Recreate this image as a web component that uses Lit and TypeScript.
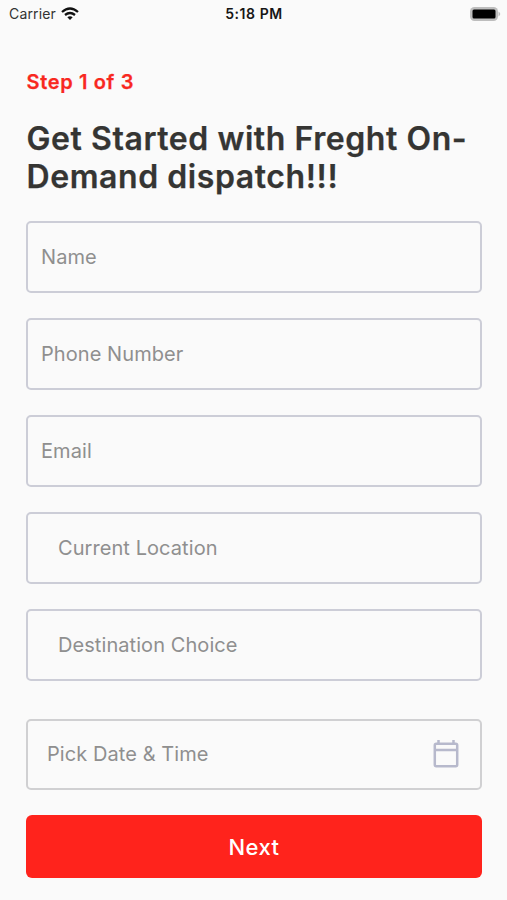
import { LitElement, html, css } from "lit";
import { customElement, property } from "lit/decorators.js";

@customElement("form-field")
class FormField extends LitElement {
  @property() label = "";
  static styles = css`
    :host { display: flex; align-items: center; box-sizing: border-box; height: 72px; padding: 0 21px 0 13px; border: 2px solid #cccdd7; border-radius: 5px; }
    :host([indent]) { padding-left: 30px; }
    :host([picker]) { height: 71px; padding-left: 19px; justify-content: space-between; border-color: #d0d0d2; }
    .label { font-size: 20px; line-height: 24px; letter-spacing: 0.07px; color: #8f8f8f; }
  `;
  render() {
    return html`<span class="label">${this.label}</span><slot></slot>`;
  }
}

@customElement("app-root")
class AppRoot extends LitElement {
  static styles = css`
    :host { display: flex; flex-direction: column; box-sizing: border-box; width: 100%; height: 900px; background: #fafafa; font-family: Inter, "Liberation Sans", sans-serif; overflow: hidden; }
    .status { display: grid; grid-template-columns: 1fr auto 1fr; align-items: center; height: 27px; padding: 0 6px 0 9px; font-size: 14px; line-height: 27px; color: #333; box-sizing: border-box; }
    .carrier { display: flex; align-items: center; gap: 5.5px; letter-spacing: 0.15px; }
    .time { margin-left: -2px; font-weight: 600; font-size: 14px; letter-spacing: 0.55px; color: #161616; }
    .battery { justify-self: end; }
    main { display: flex; flex-direction: column; padding: 0 25px 0 26px; }
    .step { margin-top: 43px; padding-left: 0.5px; font-size: 20px; line-height: 24px; font-weight: 600; letter-spacing: 0.65px; color: #f8281f; -webkit-text-stroke: 0.25px currentColor; }
    h1 { margin: 26px 0 24.5px; padding-left: 0.5px; font-size: 32px; line-height: 38px; font-weight: 600; letter-spacing: 0.57px; color: #353533; white-space: nowrap; -webkit-text-stroke: 0.25px currentColor; }
    form { display: flex; flex-direction: column; gap: 25.3px; }
    .destination { margin-top: -1px; }
    .picker { margin-top: 12.8px; }
    button { height: 63px; margin-top: 0; border: 0; border-radius: 6px; background: #ff231c; color: #fff; font: 500 22px Inter, sans-serif; letter-spacing: 0.5px; }
    svg { display: block; }
  `;
  render() {
    return html`
      <div class="status">
        <div class="carrier"><span>Carrier</span>
          <svg width="18" height="14" viewBox="0 0 18 14" fill="none" stroke="#111" stroke-width="2.3"><path d="M1 5Q9-2 17 5M4 8Q9 4 14 8"/><path d="M6.3 10.3Q9 8.2 11.7 10.3L9 13Z" fill="#111" stroke="none"/></svg>
        </div>
        <span class="time">5:18 PM</span>
        <svg class="battery" width="31" height="14" viewBox="0 0 31 14"><rect width="28" height="14" rx="4.5" fill="#bdbdbd"/><rect x="2.5" y="2.5" width="23" height="9" rx="1.5" fill="#000"/><path d="M28.5 4.5Q32 7 28.5 9.5Z" fill="#bdbdbd"/></svg>
      </div>
      <main>
        <div class="step">Step 1 of 3</div>
        <h1>Get Started with Freght On-<br />Demand dispatch!!!</h1>
        <form>
          <form-field label="Name"></form-field>
          <form-field label="Phone Number"></form-field>
          <form-field label="Email"></form-field>
          <form-field indent label="Current Location"></form-field>
          <form-field class="destination" indent label="Destination Choice"></form-field>
          <form-field class="picker" picker label="Pick Date &amp; Time">
            <svg width="26" height="28" viewBox="0 0 26 28" fill="none" stroke="#b7b9cc" stroke-width="2.5"><rect x="1.8" y="3.8" width="22.4" height="22.4" rx="1.5"/><path d="M2 10H24M5.5 0V4M20.5 0V4"/></svg>
          </form-field>
          <button type="button">Next</button>
        </form>
      </main>
    `;
  }
}
